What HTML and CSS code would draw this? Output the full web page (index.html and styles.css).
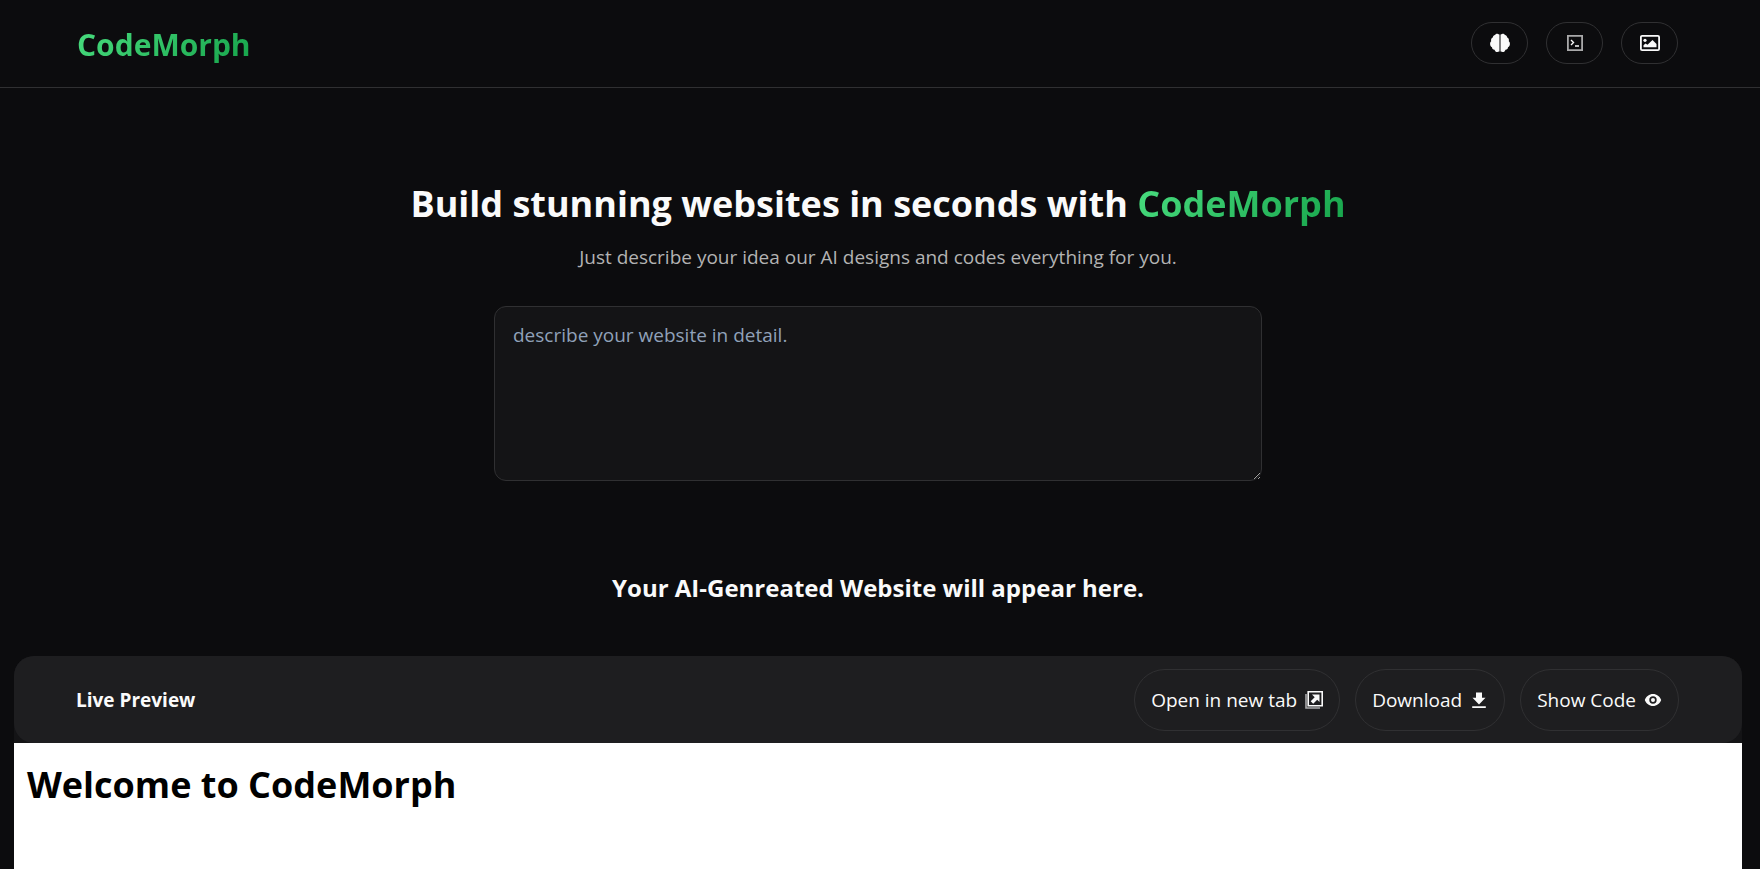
FILE: index.html
```html
<!DOCTYPE html>
<html lang="en">
<head>
<meta charset="utf-8">
<meta name="viewport" content="width=device-width, initial-scale=1">
<title>CodeMorph</title>
<link rel="stylesheet" href="styles.css">
</head>
<body>
<header class="nav">
  <a class="logo brand" href="#">CodeMorph</a>
  <nav class="nav-actions">
    <button class="icon-btn" type="button" aria-label="AI">
      <svg class="icon-lg" viewBox="0 0 20 20" aria-hidden="true"><path fill="currentColor" d="M9 1.4v17.2c-.8.5-2.600.6-3.500-.2-.5-.5-.8-1-1-1.600-1.500-.1-2.500-1.100-2.500-2.500C.8 13.500.1 12.300.1 10.900c0-1.200.4-2 1.100-2.600-.5-1.500.2-3.100 1.600-3.700C3 3.100 3.900 2.300 5 2.100 5.800.7 7.800.5 9 1.400Z"/><path fill="currentColor" d="M11 1.400v17.200c.8.5 2.600.6 3.500-.2.5-.5.8-1 1-1.600 1.500-.1 2.500-1.100 2.500-2.500 1.200-.8 1.900-2 1.900-3.400 0-1.200-.4-2-1.100-2.600.5-1.500-.2-3.100-1.600-3.700C17 3.100 16.100 2.300 15 2.100 14.200.7 12.200.5 11 1.400Z"/><path fill="#7d7d7e" d="M9 1.400h2v17.200H9z"/></svg>
    </button>
    <button class="icon-btn" type="button" aria-label="Terminal">
      <svg class="icon-lg" viewBox="0 0 20 20" aria-hidden="true"><path fill="none" stroke="#a9a9aa" stroke-width="1.800" d="M2.900 2.900h14.200v14.200H2.900z"/><path fill="none" stroke="currentColor" stroke-width="1.400" d="m6 7 2.500 2.500L6 12M10 13h4"/></svg>
    </button>
    <button class="icon-btn" type="button" aria-label="Images">
      <svg class="icon-lg" viewBox="0 0 20 20" aria-hidden="true"><rect x=".9" y="2.900" width="18.200" height="14.200" rx="1.200" fill="none" stroke="currentColor" stroke-width="1.800"/><circle cx="5" cy="7.300" r="1.600" fill="currentColor"/><path fill="currentColor" d="M3.500 14.200v-2l2-1.700 2 1.200L12.500 7l4 4v3.200z"/></svg>
    </button>
  </nav>
</header>
<main>
  <section class="hero">
    <h1 class="hero-title">Build stunning websites in seconds with <span class="brand">CodeMorph</span></h1>
    <p class="hero-text">Just describe your idea our AI designs and codes everything for you.</p>
    <textarea class="prompt" aria-label="Website description" placeholder="describe your website in detail."></textarea>
  </section>
  <h2 class="notice">Your AI-Genreated Website will appear here.</h2>
  <section class="preview">
    <div class="preview-bar">
      <h3 class="preview-title">Live Preview</h3>
      <div class="preview-actions">
        <button class="btn" type="button">Open in new tab
          <svg class="icon" viewBox="0 0 18 18" aria-hidden="true"><path fill="none" stroke="#a9a9aa" stroke-width="1.600" d="M1 3v14h14"/><path fill="none" stroke="currentColor" stroke-width="1.600" d="M3.200.8h14v14h-14z"/><path fill="currentColor" d="M7 3.500h7.500V11l-2.300-2.300-4 4-2.500-2.500 4-4z"/></svg>
        </button>
        <button class="btn" type="button">Download
          <svg class="icon" viewBox="0 0 18 18" aria-hidden="true"><path fill="currentColor" d="M6 1.500h6v5.300h3.500L9 13.500 2.500 6.800H6zM2.200 15.200h13.600v1.800H2.200z"/></svg>
        </button>
        <button class="btn" type="button">Show Code
          <svg class="icon" viewBox="0 0 18 18" aria-hidden="true"><path fill="currentColor" fill-rule="evenodd" d="M9 3c3.700 0 6.900 2.400 8.200 6-1.300 3.600-4.500 6-8.200 6S2.100 12.600.8 9C2.100 5.400 5.300 3 9 3Zm0 2.300a3.700 3.700 0 1 0 0 7.400 3.700 3.700 0 0 0 0-7.400Zm0 1.700a2 2 0 1 1 0 4 2 2 0 0 1 0-4Z"/></svg>
        </button>
      </div>
    </div>
    <div class="preview-frame"><h2 class="frame-title">Welcome to CodeMorph</h2></div>
  </section>
</main>
</body>
</html>
```
FILE: styles.css
```css
* {
  box-sizing: border-box;
  margin: 0;
}

body {
  min-height: 100vh;
  display: flex;
  flex-direction: column;
  background: #0c0c0e;
  color: #fafafa;
  font-family: "Segoe UI", "Open Sans", "Noto Sans", sans-serif;
  font-size: 19px;
}

button,
textarea {
  font: inherit;
  color: inherit;
}

main {
  flex: 1;
  display: flex;
  flex-direction: column;
  padding: 0 18px 0 14px;
}

.brand {
  background: linear-gradient(135deg, #4ade80, #16a34a);
  background-clip: text;
  color: transparent;
}

.nav {
  height: 88px;
  padding: 0 82px 2px 77px;
  display: flex;
  align-items: center;
  justify-content: space-between;
  border-bottom: 1px solid #303032;
}

.logo {
  font-size: 30px;
  line-height: 40px;
  padding-top: 4px;
  font-weight: 700;
  text-decoration: none;
}

.nav-actions {
  display: flex;
  gap: 18px;
}

.icon-btn {
  width: 57px;
  height: 42px;
  padding: 0;
  display: grid;
  place-items: center;
  border: 1px solid #303032;
  border-radius: 24px;
  background: transparent;
}

.icon-lg {
  width: 20px;
  height: 20px;
}

.hero {
  padding-top: 88px;
  display: flex;
  flex-direction: column;
  align-items: center;
  text-align: center;
}

.hero-title {
  font-size: 36px;
  line-height: 56px;
}

.hero-text {
  margin-top: 11px;
  color: #b3b3b3;
  line-height: 28px;
}

.prompt {
  display: block;
  width: 768px;
  max-width: 100%;
  height: 175px;
  margin-top: 35px;
  padding: 14px 18px;
  border: 1px solid #303032;
  border-radius: 12px;
  background: #141416;
  line-height: 28px;
}

.prompt::placeholder {
  color: #90a1b9;
}

.notice {
  margin-top: 87px;
  font-size: 24px;
  line-height: 40px;
  text-align: center;
}

.preview {
  flex: 1;
  display: flex;
  flex-direction: column;
  margin-top: 48px;
  border-radius: 20px 20px 0 0;
  background: #141416;
}

.preview-bar {
  min-height: 87px;
  padding: 0 63px 0 62px;
  display: flex;
  align-items: center;
  justify-content: space-between;
  border-radius: 20px;
  background: #1e1e20;
}

.preview-title {
  font-size: 19px;
}

.preview-actions {
  display: flex;
  gap: 15px;
}

.btn {
  height: 62px;
  padding: 0 16px;
  display: flex;
  align-items: center;
  gap: 8px;
  border: 1px solid #303032;
  border-radius: 31px;
  background: transparent;
}

.icon {
  width: 18px;
  height: 18px;
}

.preview-frame {
  flex: 1;
  padding: 15px 13px;
  background: #fff;
  color: #000;
}

.frame-title {
  font-size: 36px;
  line-height: 54px;
}
```
